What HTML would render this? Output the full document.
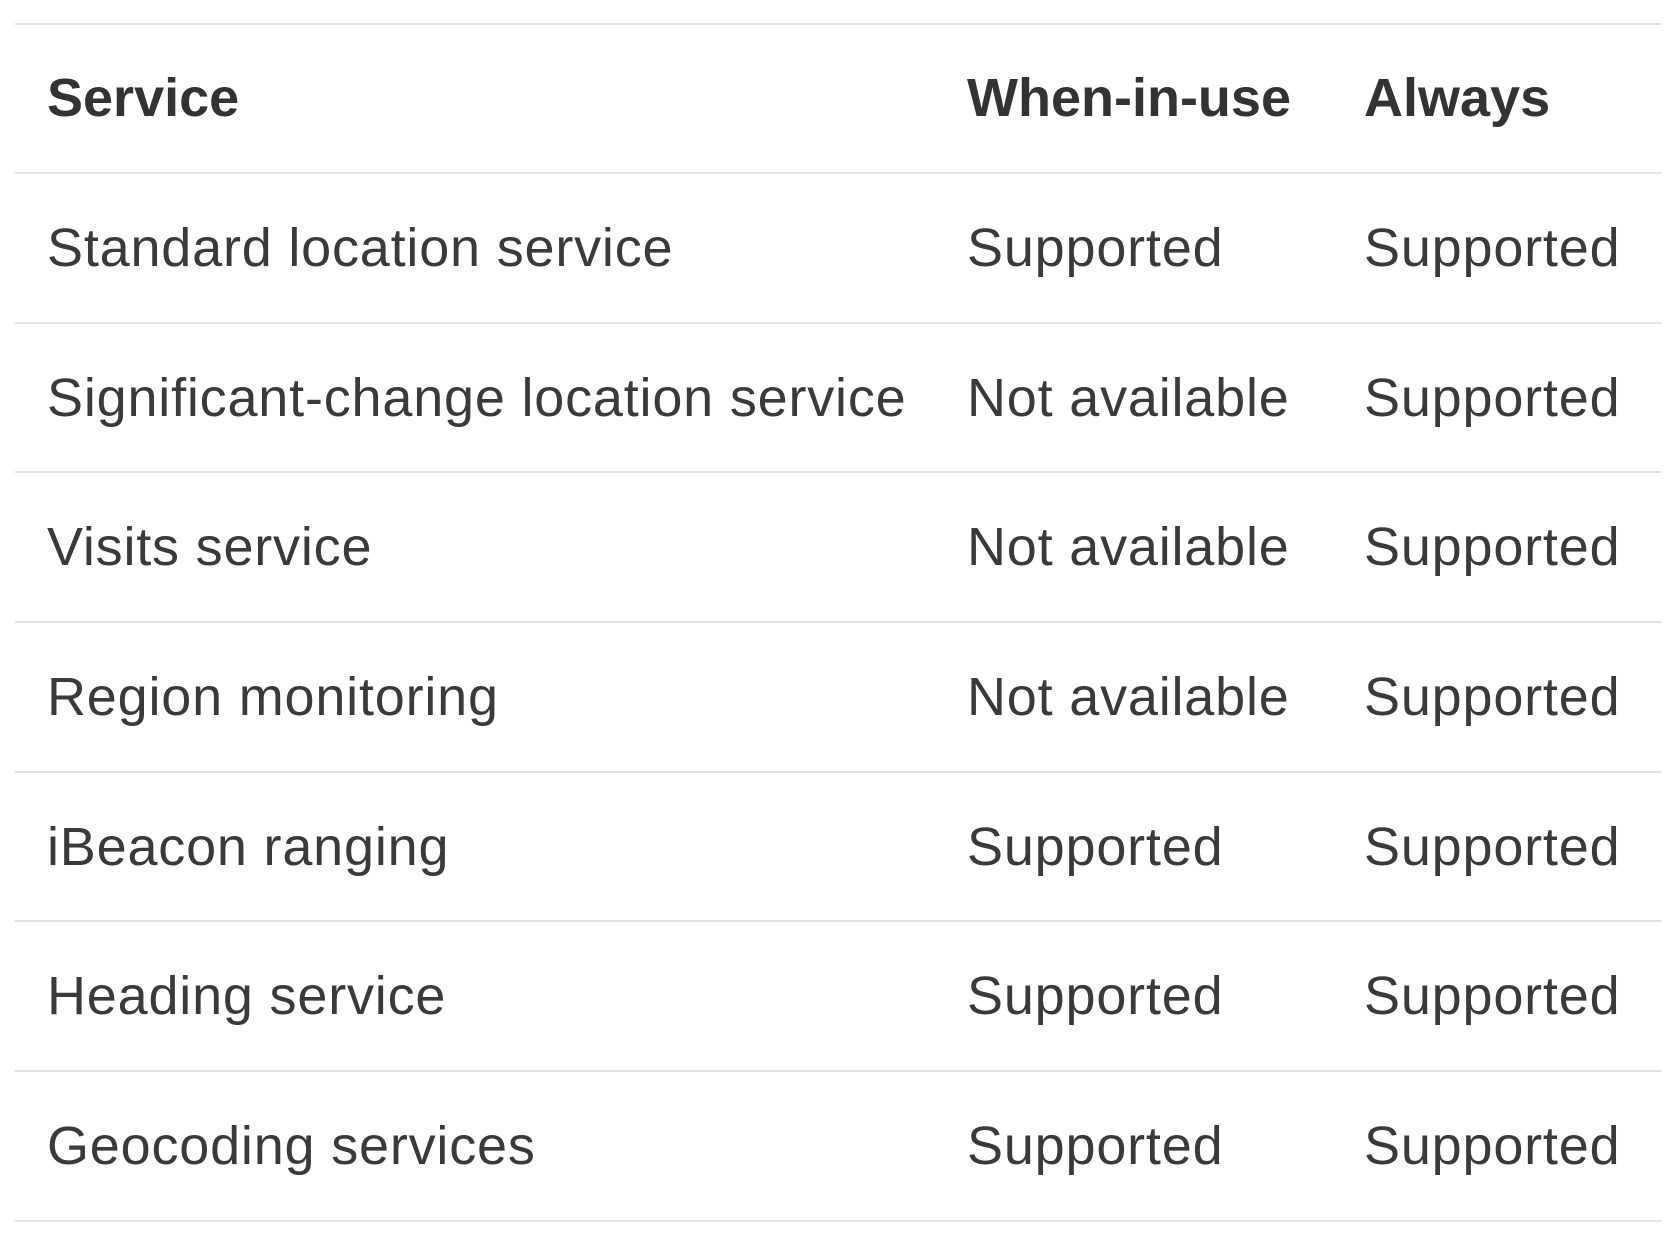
<!DOCTYPE html>
<html><head><meta charset="utf-8"><style>
html,body{margin:0;padding:0;background:#fff;width:1672px;height:1240px;overflow:hidden}
body{position:relative;font-family:"Liberation Sans",sans-serif;color:#3a3a3a}
.l{position:absolute;left:15px;width:1646px;height:2px;background:#e0e0e0}
.t{position:absolute;font-size:54px;line-height:55px;white-space:nowrap;letter-spacing:0.8px}
.h{font-weight:bold;color:#333;letter-spacing:0}
</style></head><body>
<div class="l" style="top:23px"></div>
<div class="t h" style="left:47px;top:71px">Service</div>
<div class="t h" style="left:967px;top:71px">When-in-use</div>
<div class="t h" style="left:1364px;top:71px">Always</div>

<div class="l" style="top:172px"></div>
<div class="t" style="left:47px;top:221px">Standard location service</div>
<div class="t" style="left:967px;top:221px">Supported</div>
<div class="t" style="left:1364px;top:221px">Supported</div>

<div class="l" style="top:322px"></div>
<div class="t" style="left:47px;top:371px">Significant-change location service</div>
<div class="t" style="left:967px;top:371px">Not available</div>
<div class="t" style="left:1364px;top:371px">Supported</div>

<div class="l" style="top:471px"></div>
<div class="t" style="left:47px;top:520px">Visits service</div>
<div class="t" style="left:967px;top:520px">Not available</div>
<div class="t" style="left:1364px;top:520px">Supported</div>

<div class="l" style="top:621px"></div>
<div class="t" style="left:47px;top:670px">Region monitoring</div>
<div class="t" style="left:967px;top:670px">Not available</div>
<div class="t" style="left:1364px;top:670px">Supported</div>

<div class="l" style="top:771px"></div>
<div class="t" style="left:47px;top:820px">iBeacon ranging</div>
<div class="t" style="left:967px;top:820px">Supported</div>
<div class="t" style="left:1364px;top:820px">Supported</div>

<div class="l" style="top:920px"></div>
<div class="t" style="left:47px;top:969px">Heading service</div>
<div class="t" style="left:967px;top:969px">Supported</div>
<div class="t" style="left:1364px;top:969px">Supported</div>

<div class="l" style="top:1070px"></div>
<div class="t" style="left:47px;top:1119px">Geocoding services</div>
<div class="t" style="left:967px;top:1119px">Supported</div>
<div class="t" style="left:1364px;top:1119px">Supported</div>

<div class="l" style="top:1220px"></div>
</body></html>
